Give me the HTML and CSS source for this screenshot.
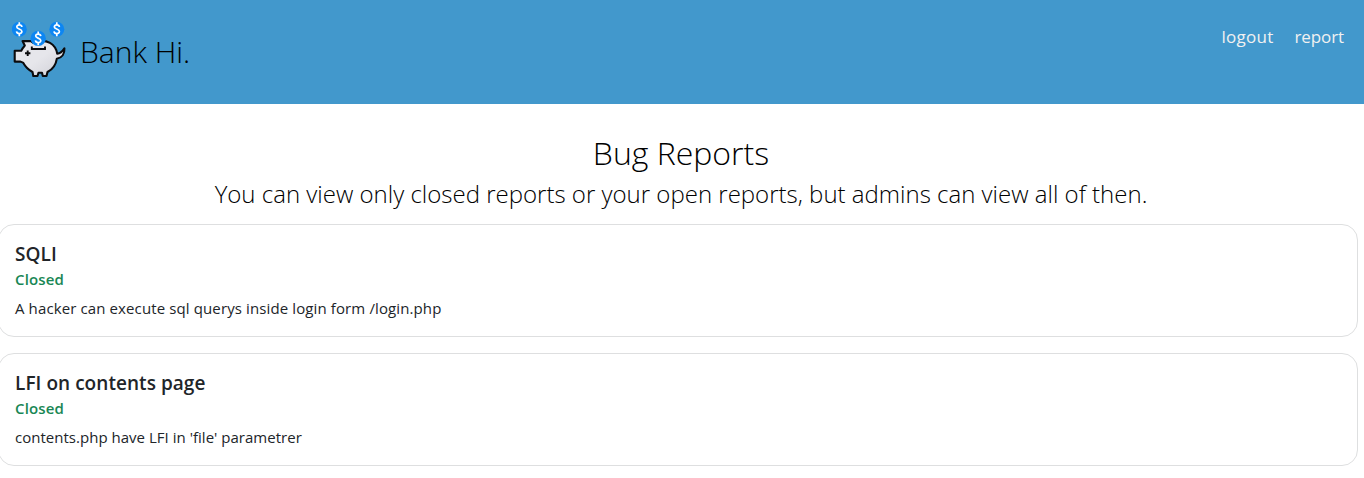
FILE: index.html
```html
<!DOCTYPE html>
<html lang="en">
<head>
<meta charset="utf-8">
<title>Bank Hi.</title>
<link rel="stylesheet" href="styles.css">
</head>
<body>
<header class="header">
  <a class="brand">
    <svg class="logo" viewBox="0 0 56 60" width="56" height="60">
      <defs>
        <linearGradient id="body" x1="0" y1="0" x2="1" y2="1">
          <stop offset="0.5" stop-color="#e6e6eb"/>
          <stop offset="1" stop-color="#cfcfd6"/>
        </linearGradient>
      </defs>
      <path d="M10.500 13.500H19L21 15.200C25 12.800 33 12.400 38 15.200C42 17.500 44.500 21.500 45.200 26C49 26 51 23 52.400 20.800C52.800 26 50 30.200 44.800 31.200C44 36.500 41 41.500 35.500 44.400L34.500 48.400H30.800L30 45.200H26.500L25.500 48.400H21.300L20.500 44.400C16.500 42.500 13.500 39.500 11 35L8.500 34H2.700V23.200H9.200C10 21 11.500 19.500 12.800 18Z" fill="url(#body)" stroke="#0b0b0d" stroke-width="2.1" stroke-linejoin="round" transform="translate(0 7.600)"/>
      <path d="M19.800 26.400V29H33V26.400M15.700 30.600V36M13 33.300H18.400" fill="none" stroke="#0b0b0d" stroke-width="1.9"/>
      <g fill="#0d86f2">
        <circle cx="7.300" cy="9.300" r="7.500"/>
        <circle cx="26.200" cy="18.400" r="7.700"/>
        <circle cx="44.800" cy="9.300" r="7.500"/>
      </g>
      <g fill="none" stroke="#fff" stroke-width="1.700">
        <path id="coin" d="M9.900 7C9.500 4.300 4.800 4.300 4.800 6.900C4.800 9.300 9.900 8.700 9.900 11.500C9.900 14.200 4.900 14.200 4.500 11.300M7.300 2.300V5.200M7.300 13.300V16.200"/>
        <use href="#coin" x="18.900" y="9.100"/>
        <use href="#coin" x="37.500"/>
      </g>
    </svg>
    <span class="brand-name">Bank Hi.</span>
  </a>
  <nav class="nav">
    <a class="logout">logout</a>
    <a class="report-link">report</a>
  </nav>
</header>
<main>
  <h1 class="title">Bug Reports</h1>
  <p class="subtitle">You can view only closed reports or your open reports, but admins can view all of then.</p>
  <section class="reports">
    <article class="card">
      <h2 class="card-title">SQLI</h2>
      <p class="status">Closed</p>
      <p class="text text-wide">A hacker can execute sql querys inside login form /login.php</p>
    </article>
    <article class="card">
      <h2 class="card-title">LFI on contents page</h2>
      <p class="status">Closed</p>
      <p class="text">contents.php have LFI in 'file' parametrer</p>
    </article>
  </section>
</main>
</body>
</html>
```
FILE: styles.css
```css
* { box-sizing: border-box; }
body {
  margin: 0;
  background: #fff;
  color: #212529;
  font-family: "Open Sans", "Noto Sans", sans-serif;
  overflow: hidden;
}
h1, h2, p { margin: 0; }
.header {
  height: 104px;
  padding: 20px 20px 0 12px;
  display: flex;
  justify-content: space-between;
  align-items: flex-start;
  background: #4298cc;
}
.brand { display: flex; }
.logo { display: block; }
.brand-name {
  margin: 12px 0 0 12px;
  font-size: 30px;
  font-weight: 300;
  line-height: 40px;
  color: #000;
}
.nav {
  display: flex;
  gap: 21px;
  font-size: 17px;
  line-height: 24px;
  padding-top: 5px;
  color: #f1f1f1;
}
.logout { letter-spacing: 0.25px; }
.report-link { letter-spacing: -0.1px; }
.title {
  margin-top: 29px;
  padding-right: 2px;
  font-size: 32px;
  font-weight: 300;
  line-height: 40px;
  text-align: center;
  color: #000;
}
.subtitle {
  margin-top: 5px;
  padding-right: 2px;
  font-size: 24px;
  font-weight: 300;
  line-height: 32px;
  text-align: center;
  color: #000;
}
.reports {
  display: flex;
  flex-direction: column;
  gap: 16px;
  margin: 14px 6px 0 -2px;
}
.card {
  height: 113px;
  padding: 17px 16px 0;
  border: 1px solid #dedfe0;
  border-radius: 16px;
}
.card-title {
  font-size: 19px;
  font-weight: 570;
  line-height: 24px;
  letter-spacing: 0.05px;
}
.status {
  font-size: 15px;
  font-weight: 570;
  line-height: 24px;
  margin-top: 1px;
  letter-spacing: 0.15px;
  color: #198754;
}
.text {
  font-size: 15px;
  line-height: 24px;
  margin-top: 5px;
  letter-spacing: 0.02px;
}
.text-wide { letter-spacing: 0.117px; }
```
